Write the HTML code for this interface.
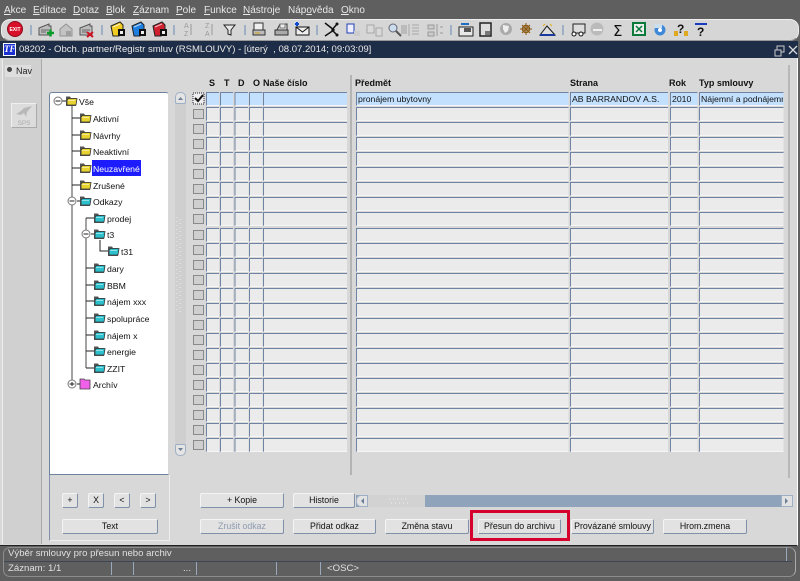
<!DOCTYPE html>
<html lang="cs">
<head>
<meta charset="utf-8">
<title>08202</title>
<style>
html,body{margin:0;padding:0;background:#5f5f5f}
#p{position:relative;width:800px;height:581px;overflow:hidden;background:#5f5f5f;font-family:"Liberation Sans",sans-serif;font-size:10px;color:#111;filter:blur(.35px)}
#p div{position:absolute;box-sizing:border-box;white-space:nowrap}
.m{top:4px;color:#e8e8e8;font-size:10px;line-height:13px}
.m u{text-decoration:underline}
.h{top:78px;font-weight:bold;font-size:9px;line-height:11px;color:#111}
.t{font-size:8.7px;line-height:12px;color:#111}
.b{height:15px;background:#e2e2e2;border:1px solid #7f90a8;border-top-color:#f4f4f4;border-left-color:#f4f4f4;border-radius:2px;text-align:center;font-size:8.8px;line-height:13px;color:#111}
.c{font-size:8.7px;line-height:13px;color:#111}
.s{color:#e0e0e0;font-size:9.6px;line-height:12px}
.sep{top:25px;width:2px;height:10px;background:#9fb0c6}
.d{top:562px;width:1px;height:13px;background:#9aa8bb}
svg{position:absolute;overflow:visible}
</style>
</head>
<body>
<div id="p">
<div class="m" style="left:4px"><u>A</u>kce</div>
<div class="m" style="left:33px"><u>E</u>ditace</div>
<div class="m" style="left:73px"><u>D</u>otaz</div>
<div class="m" style="left:106px"><u>B</u>lok</div>
<div class="m" style="left:133px"><u>Z</u>áznam</div>
<div class="m" style="left:176px"><u>P</u>ole</div>
<div class="m" style="left:204px"><u>F</u>unkce</div>
<div class="m" style="left:243px"><u>N</u>ástroje</div>
<div class="m" style="left:288px">Náp<u>o</u>věda</div>
<div class="m" style="left:341px"><u>O</u>kno</div>

<!-- toolbar -->
<div style="left:1px;top:19px;width:798px;height:22px;background:#d6d6d6;border-radius:9px;border:1px solid #eee;border-bottom-color:#999"></div>
<div class="sep" style="left:30px"></div><div class="sep" style="left:101px"></div><div class="sep" style="left:173px"></div><div class="sep" style="left:244px"></div><div class="sep" style="left:316px"></div><div class="sep" style="left:450px"></div><div class="sep" style="left:562px"></div>
<svg width="800" height="42" style="left:0;top:0">
<defs>
<g id="card"><path d="M0 4l10-4v2l2 0v9H0z" fill="#bdbdbd" stroke="#555"/><path d="M2 6h8M2 8h5" stroke="#666"/></g>
<g id="fold"><path d="M0 4l9-4 3 3v8l-4 3H2z" fill="currentColor" stroke="#222"/><path d="M2 5l7-3" stroke="#fff" opacity=".7"/><rect x="7" y="7" width="7" height="7" fill="#111"/><rect x="9" y="9" width="3" height="3" fill="#eee"/></g>
</defs>
<circle cx="15" cy="29" r="7.5" fill="#d8102a" stroke="#8c0b1a"/><text x="15" y="31" font-size="5" font-weight="bold" fill="#fff" text-anchor="middle" font-family="Liberation Sans">EXIT</text>
<use href="#card" x="39" y="24"/><path d="M47 33h7M50.500 29.500v7" stroke="#0a9a2a" stroke-width="2.500"/>
<g opacity=".7"><path d="M60 29l6-5 6 5v7H60z" fill="#bbb" stroke="#777"/><rect x="66" y="31" width="5" height="5" fill="#888"/></g>
<use href="#card" x="80" y="24"/><path d="M87 32l6 5M93 32l-6 5" stroke="#d01020" stroke-width="2"/>
<use href="#fold" x="111" y="22" color="#f2cc20"/><use href="#fold" x="132" y="22" color="#1f7fe0"/><use href="#fold" x="153" y="22" color="#d02030"/>
<g font-family="Liberation Sans" font-size="7" fill="#999"><text x="184" y="28">A</text><text x="184" y="36">Z</text><text x="205" y="28">Z</text><text x="205" y="36">A</text></g>
<path d="M191 24v11M212 24v11" stroke="#999"/>
<path d="M224 25h11l-4 5v5l-3-1v-4z" fill="#e8e8e8" stroke="#222"/>
<rect x="254" y="23" width="9" height="7" fill="#eee" stroke="#333"/><rect x="253" y="30" width="12" height="5" fill="#bbb" stroke="#333"/><path d="M255 33h5" stroke="#d3a010"/>
<path d="M277 30l3-6h7v6z" fill="#ddd" stroke="#333"/><rect x="275" y="30" width="13" height="5" fill="#aaa" stroke="#333"/><path d="M280 24h5v4h-5z" fill="#eee" stroke="#777"/>
<rect x="296" y="27" width="13" height="8" fill="#eee" stroke="#111"/><path d="M296 27l6.500 5 6.500-5" fill="none" stroke="#111"/><path d="M299 24h-4M297 22v4" stroke="#0a4ad0" stroke-width="2"/>
<path d="M325 23l9 7-9 6M337 24l-5 6 5 5" fill="none" stroke="#111" stroke-width="1.500"/><circle cx="337" cy="24" r="1.500" fill="#111"/><circle cx="337" cy="35" r="1.500" fill="#111"/>
<rect x="347" y="24" width="7" height="9" fill="#eef" stroke="#2040b0"/><rect x="354" y="31" width="6" height="5" fill="#ccc"/>
<g opacity=".6"><rect x="367" y="25" width="7" height="8" fill="#ddd" stroke="#888"/><rect x="376" y="28" width="6" height="8" fill="#ddd" stroke="#888"/></g>
<circle cx="393" cy="28" r="4" fill="#cde" stroke="#667"/><path d="M396 31l5 5" stroke="#555" stroke-width="2"/><rect x="401" y="25" width="6" height="9" fill="#bbb"/>
<path d="M409 24v12M412 25h7M412 28h7M412 31h7M412 34h7" stroke="#a8a8a8"/>
<path d="M428 25h6v4h-6zM428 32h6v4h-6zM437 24v12M440 27h3M440 33h3" fill="#ccc" stroke="#999"/>
<rect x="459" y="27" width="14" height="9" fill="#e8e8e8" stroke="#222"/><path d="M461 24h8" stroke="#1f6fc0" stroke-width="2"/><rect x="464" y="28" width="7" height="4" fill="#555"/>
<rect x="480" y="23" width="11" height="13" fill="#ddd" stroke="#222" stroke-width="1.500"/><rect x="485" y="31" width="5" height="4" fill="#777"/>
<circle cx="506" cy="29" r="6" fill="#aaa"/><path d="M503 25l6 1-1 5-3 2-2-4z" fill="#eee"/>
<circle cx="526" cy="29" r="3.500" fill="none" stroke="#8a5a12" stroke-width="1.500"/><path d="M526 23v12M520 29h12M522 25l8 8M530 25l-8 8" stroke="#8a5a12"/>
<path d="M540 35l7-9 8 9z" fill="#ddd" stroke="#111"/><path d="M540 35h15" stroke="#1a3aa0" stroke-width="2"/><path d="M543 26l2-2M552 26l-2-2" stroke="#e0b010"/>
<rect x="573" y="24" width="12" height="9" fill="#ddd" stroke="#222"/><circle cx="574" cy="34" r="2" fill="#fff" stroke="#111"/><circle cx="581" cy="34" r="2" fill="#fff" stroke="#111"/>
<circle cx="597" cy="29" r="6.500" fill="#bbb"/><path d="M593 30h9" stroke="#eee" stroke-width="2"/>
<text x="613" y="36" font-size="15" fill="#111" font-family="DejaVu Sans">Σ</text>
<rect x="633" y="23" width="12" height="12" fill="#eee" stroke="#0b7a3a" stroke-width="2"/><path d="M636 26l6 6M642 26l-6 6" stroke="#0b7a3a" stroke-width="1.500"/>
<circle cx="660" cy="30" r="5.500" fill="#3f88d8"/><rect x="654" y="24" width="8" height="4" fill="#cde"/><circle cx="660" cy="30" r="2" fill="#fff"/>
<text x="677" y="33" font-size="12" font-weight="bold" fill="#111" font-family="Liberation Sans">?</text><rect x="674" y="31" width="4" height="5" fill="#e0aa20"/><rect x="684" y="31" width="4" height="5" fill="#e0aa20"/>
<rect x="695" y="23" width="12" height="2" fill="#1a3ac0"/><text x="697" y="36" font-size="12" font-weight="bold" fill="#111" font-family="Liberation Sans">?</text>
</svg>

<!-- window -->
<div style="left:0;top:41px;width:798px;height:505px;background:#d8d8d8;border-right:1px solid #fff;border-bottom:1px solid #222"></div>
<div style="left:0;top:41px;width:798px;height:17px;background:#1e2d47"></div>
<div style="left:3px;top:43px;width:13px;height:13px;background:#1a30d0;border:1px solid #fff;color:#fff;font:italic bold 9px/11px 'Liberation Serif',serif;text-align:center">TF</div>
<div style="left:19px;top:43px;color:#e8e8e8;font-size:9.55px;line-height:13px">08202 - Obch. partner/Registr smluv (RSMLOUVY) - [úterý&nbsp; , 08.07.2014; 09:03:09]</div>
<svg width="24" height="12" style="left:774px;top:44px"><path d="M1 6h6v6H1zM3 6V2h7v6H7" fill="none" stroke="#c8c8c8"/><path d="M15 2l8 8M23 2l-8 8" stroke="#d8d8d8" stroke-width="1.300"/></svg>

<!-- nav panel -->
<div style="left:2px;top:59px;width:40px;height:485px;background:#d0d0d0;border-right:1px solid #a9a9a9;border-left:1px solid #eee"></div>
<div style="left:5px;top:65px;width:26px;height:12px;background:#dedede"></div>
<div style="left:6px;top:66px;width:7px;height:7px;border-radius:50%;background:#444;border:1px solid #ddd"></div>
<div style="left:16px;top:65px;font-size:9px;line-height:12px;color:#222">Nav</div>
<div style="left:11px;top:103px;width:26px;height:25px;background:#dcdcdc;border:1px solid #f0f0f0;border-right-color:#aaa;border-bottom-color:#aaa;color:#aaa;font-size:6.500px;line-height:7px;padding-top:16px;text-align:center">SPS</div>
<svg width="20" height="12" style="left:15px;top:105px"><path d="M1 9l5-3 3-3 8-2-5 6-1 5-2-4-3 2z" fill="#b8b8b8"/></svg>

<!-- tree -->
<div style="left:49px;top:92px;width:120px;height:383px;background:#fff;border:1px solid #6e829e;border-right-color:#d8d8d8;border-bottom-color:#6e829e;border-radius:3px 3px 0 0"></div>
<div style="left:49px;top:475px;width:121px;height:66px;border:1px solid #7f90a8;border-top:none;border-right-color:#eee;border-bottom-color:#eee"></div>
<svg width="130" height="310" style="left:50px;top:90px">
<defs>
<g id="f"><path d="M0 3V1.500h4l1 1.500h5v8H0z" fill="#555"/><path d="M1 5l1.500-1.500H11l-1 6.500H1z" fill="currentColor" stroke="#333" stroke-width=".8"/><path d="M2 5.500h7" stroke="#fff" stroke-width=".7" opacity=".7"/></g>
<g id="o"><circle cx="0" cy="0" r="4" fill="#fff" stroke="#777"/><path d="M-2.500 0h5" stroke="#222"/></g>
</defs>
<path d="M22 16V295M36 128V278" stroke="#666" stroke-width="1.200" fill="none"/>
<path d="M12 11h4M22 28h8M22 45h8M22 61h8M22 78h8M22 95h8M27 111h3M36 128h8M41 144h3M50 150v11h8M36 178h8M36 195h8M36 211h8M36 228h8M36 245h8M36 261h8M36 278h8M27 294h3" stroke="#222" fill="none"/>
<use href="#o" x="8" y="11"/><use href="#o" x="22" y="111"/><use href="#o" x="36" y="144"/><use href="#o" x="22" y="294"/><path d="M22 292v4" stroke="#222"/>
<g color="#e7d230"><use href="#f" x="16" y="5"/><use href="#f" x="30" y="22"/><use href="#f" x="30" y="39"/><use href="#f" x="30" y="55"/><use href="#f" x="30" y="72"/><use href="#f" x="30" y="89"/></g>
<g color="#2cc0cc"><use href="#f" x="30" y="105"/><use href="#f" x="44" y="122"/><use href="#f" x="44" y="138"/><use href="#f" x="58" y="155"/><use href="#f" x="44" y="172"/><use href="#f" x="44" y="189"/><use href="#f" x="44" y="205"/><use href="#f" x="44" y="222"/><use href="#f" x="44" y="239"/><use href="#f" x="44" y="255"/><use href="#f" x="44" y="272"/></g>
<path d="M30 289h4l1 1h5v9H30z" fill="#f060e8" stroke="#444" stroke-width=".8"/>
</svg>
<div style="left:92px;top:160px;width:49px;height:16px;background:#1c1cff"></div>
<div class="t" style="left:79px;top:96px">Vše</div>
<div class="t" style="left:93px;top:113px">Aktivní</div>
<div class="t" style="left:93px;top:130px">Návrhy</div>
<div class="t" style="left:93px;top:146px">Neaktivní</div>
<div class="t" style="left:93px;top:163px;color:#fff">Neuzavřené</div>
<div class="t" style="left:93px;top:180px">Zrušené</div>
<div class="t" style="left:93px;top:196px">Odkazy</div>
<div class="t" style="left:107px;top:213px">prodej</div>
<div class="t" style="left:107px;top:229px">t3</div>
<div class="t" style="left:121px;top:246px">t31</div>
<div class="t" style="left:107px;top:263px">dary</div>
<div class="t" style="left:107px;top:280px">BBM</div>
<div class="t" style="left:107px;top:296px">nájem xxx</div>
<div class="t" style="left:107px;top:313px">spolupráce</div>
<div class="t" style="left:107px;top:330px">nájem x</div>
<div class="t" style="left:107px;top:346px">energie</div>
<div class="t" style="left:107px;top:363px">ZZIT</div>
<div class="t" style="left:93px;top:379px">Archív</div>

<!-- vertical scrollbar -->
<div style="left:175px;top:92px;width:11px;height:364px;background:#cfcfcf;border-radius:5px"></div>
<div style="left:175px;top:92px;width:11px;height:12px;background:#e4e4e4;border:1px solid #9fb0c6;border-radius:5px 5px 2px 2px"></div>
<div style="left:175px;top:444px;width:11px;height:12px;background:#e4e4e4;border:1px solid #9fb0c6;border-radius:2px 2px 5px 5px"></div>
<svg width="11" height="364" style="left:175px;top:92px"><path d="M3 8h5L5.500 5zM3 356h5l-2.500 3z" fill="#6c7f99"/><path d="M2 125V220M5 127V220" stroke="#eee" stroke-width="1" stroke-dasharray="1 3"/></svg>

<!-- headers -->
<div class="h" style="left:209px">S</div><div class="h" style="left:224px">T</div><div class="h" style="left:238px">D</div><div class="h" style="left:253px">O</div>
<div class="h" style="left:263px">Naše číslo</div><div class="h" style="left:355px">Předmět</div><div class="h" style="left:570px">Strana</div><div class="h" style="left:669px">Rok</div><div class="h" style="left:699px">Typ smlouvy</div>
<div style="left:350px;top:75px;width:2px;height:400px;background:#b4b4b4"></div>
<div style="left:788px;top:65px;width:2px;height:413px;background:#b8b8b8"></div>

<!-- grid -->
<svg width="640" height="370" style="left:190px;top:88px">
<defs>
<g id="r" fill="#ebebeb" stroke="#6f84a2" stroke-width="1">
<rect x="3.500" y="6.500" width="10" height="9" fill="#cfcfcf" stroke="#8a8a8a"/>
<path d="M17 5h12v12H17zM31 5h12v12H31zM45.500 5h13v12h-13zM60 5h12.500v12H60zM74 5h83v12H74zM167 5h211.500v12H167zM381 5h97v12h-97zM481 5h26.500v12H481zM510 5h83.500v12H510z" stroke="none"/>
<path d="M16.500 17.500v-13h12.500M30.500 17.500v-13h12.500M45 17.500v-13h13M59.500 17.500v-13h13M73.500 17.500v-13h83.500M166.500 17.500v-13h212M380.500 17.500v-13h97.500M480.500 17.500v-13h27M509.500 17.500v-13h84" fill="none"/>
<path d="M17 17.500h12M31 17.500h12M45.500 17.500h13M60 17.500h12.500M74 17.500h83M167 17.500h211.500M381 17.500h97M481 17.500h26.500M510 17.500h83.500" fill="none" stroke="#f6f6f6"/>
</g>
</defs>
<use href="#r" y="0"/><use href="#r" y="15"/><use href="#r" y="30"/><use href="#r" y="45"/><use href="#r" y="60"/><use href="#r" y="75"/><use href="#r" y="90"/><use href="#r" y="105"/><use href="#r" y="120"/><use href="#r" y="136"/><use href="#r" y="151"/><use href="#r" y="166"/><use href="#r" y="181"/><use href="#r" y="196"/><use href="#r" y="211"/><use href="#r" y="226"/><use href="#r" y="241"/><use href="#r" y="256"/><use href="#r" y="271"/><use href="#r" y="286"/><use href="#r" y="301"/><use href="#r" y="316"/><use href="#r" y="331"/><use href="#r" y="346"/>
<path d="M17 5h12v12H17zM31 5h12v12H31zM45.500 5h13v12h-13zM60 5h12.500v12H60zM74 5h83v12H74zM167 5h211.500v12H167zM381 5h97v12h-97zM481 5h26.500v12H481zM510 5h83.500v12H510z" fill="#c3e1ff"/>
<rect x="3" y="5" width="11" height="11" fill="#eee" stroke="#223" stroke-dasharray="1 1"/>
<path d="M5 10l3 3 5-6" fill="none" stroke="#111" stroke-width="2"/>
</svg>
<div class="c" style="left:358px;top:93px">pronájem ubytovny</div>
<div class="c" style="left:572px;top:93px">AB BARRANDOV A.S.</div>
<div class="c" style="left:672px;top:93px">2010</div>
<div class="c" style="left:701px;top:93px;width:82px;overflow:hidden">Nájemní a podnájemn</div>

<!-- buttons -->
<div class="b" style="left:62px;top:493px;width:16px">+</div>
<div class="b" style="left:88px;top:493px;width:16px">X</div>
<div class="b" style="left:114px;top:493px;width:16px">&lt;</div>
<div class="b" style="left:140px;top:493px;width:16px">&gt;</div>
<div class="b" style="left:62px;top:519px;width:96px">Text</div>
<div class="b" style="left:200px;top:493px;width:84px">+ Kopie</div>
<div class="b" style="left:293px;top:493px;width:62px">Historie</div>
<div class="b" style="left:200px;top:519px;width:84px;color:#8d9bb0">Zrušit odkaz</div>
<div class="b" style="left:293px;top:519px;width:83px">Přidat odkaz</div>
<div class="b" style="left:385px;top:519px;width:84px">Změna stavu</div>
<div class="b" style="left:478px;top:519px;width:83px">Přesun do archivu</div>
<div class="b" style="left:571px;top:519px;width:83px">Provázané smlouvy</div>
<div class="b" style="left:663px;top:519px;width:84px">Hrom.zmena</div>
<div style="left:470px;top:510px;width:100px;height:31px;border:3px solid #d6002c"></div>

<!-- h scrollbar -->
<div style="left:356px;top:495px;width:437px;height:12px;background:#8fa3bb"></div>
<div style="left:356px;top:495px;width:12px;height:12px;background:#e2e2e2;border:1px solid #9fb0c6;border-radius:5px 0 0 5px"></div>
<div style="left:368px;top:495px;width:57px;height:12px;background:#d2d2d2"></div>
<div style="left:781px;top:495px;width:12px;height:12px;background:#e2e2e2;border:1px solid #9fb0c6"></div>
<svg width="437" height="12" style="left:356px;top:495px"><path d="M8 3v6L5 6zM429 3v6l3-3z" fill="#6c7f99"/><path d="M33 4h20M35 8h20" stroke="#eee" stroke-dasharray="1 3"/></svg>

<!-- status -->
<div style="left:3px;top:547px;width:793px;height:30px;border:1px solid #8d8d8d;border-right-color:#aaa;border-radius:7px"></div>
<div style="left:4px;top:561px;width:788px;height:1px;background:#3d4657"></div>
<div class="s" style="left:8px;top:548px">Výběr smlouvy pro přesun nebo archiv</div>
<div class="s" style="left:8px;top:563px">Záznam: 1/1</div>
<div class="s" style="left:183px;top:563px">...</div>
<div class="s" style="left:327px;top:563px">&lt;OSC&gt;</div>
<div class="d" style="left:111px"></div><div class="d" style="left:133px"></div><div class="d" style="left:196px"></div><div class="d" style="left:276px"></div><div class="d" style="left:320px"></div><div class="d" style="left:786px;top:547px;height:14px"></div>
</div>
</body>
</html>
